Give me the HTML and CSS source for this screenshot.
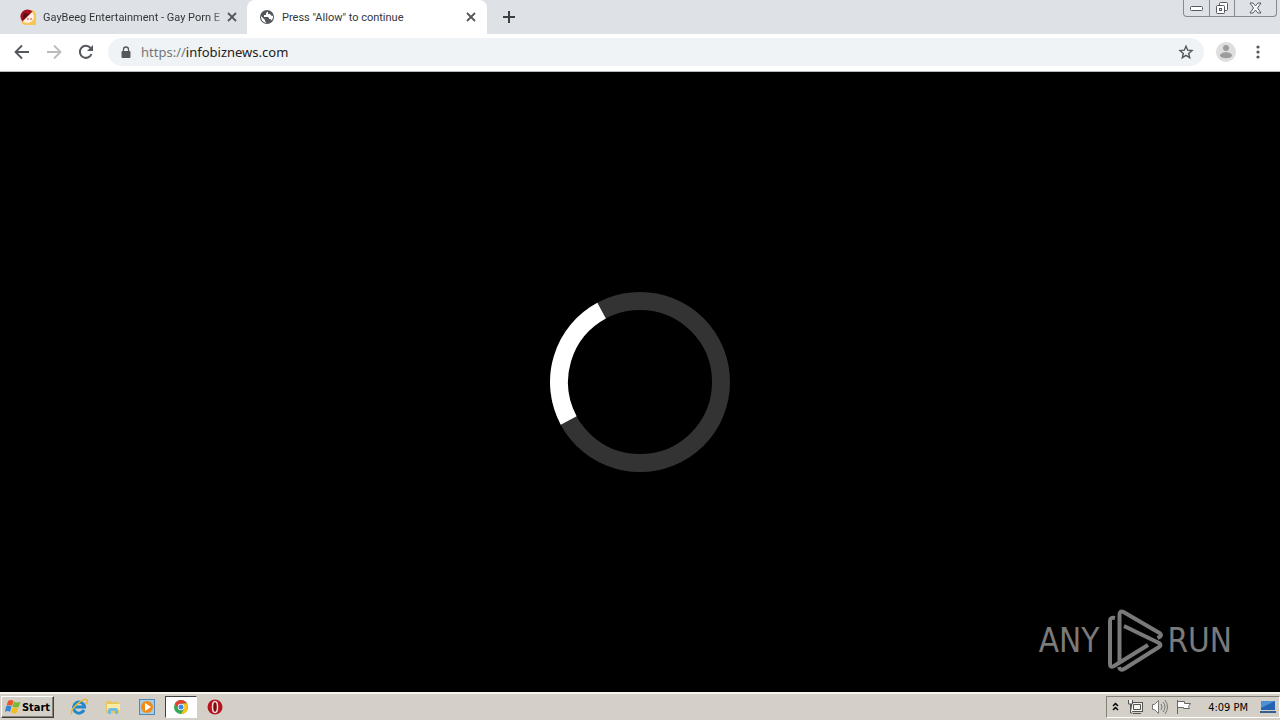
FILE: index.html
```html
<!DOCTYPE html>
<html lang="en">
<head>
<meta charset="utf-8">
<title>Press "Allow" to continue</title>
<link rel="stylesheet" href="styles.css">
</head>
<body>
<header class="browser">
  <div class="tabstrip">
    <div class="tab">
      <svg class="favicon" width="16" height="16" viewBox="0 0 16 16"><path d="M5 1h6a5 5 0 0 1 5 5v10H6a5 5 0 0 1-5-5V5z" fill="#f6c552"/><circle cx="7.500" cy="7.500" r="6.500" fill="#fff0e2"/><path d="M2.500 12.500A7 7 0 0 1 12.500 2.500z" fill="#a3121c"/><path d="M3.500 10.500A6 6 0 0 1 4.500 4l5 1z" fill="#5c0d18"/><circle cx="8" cy="10" r=".7" fill="#a3121c"/><circle cx="11" cy="10" r=".7" fill="#a3121c"/></svg>
      <span class="tab-title faded">GayBeeg Entertainment - Gay Porn E</span>
      <button class="close" aria-label="Close tab"><svg width="10" height="10" viewBox="0 0 10 10"><path d="m1 1 8 8M9 1 1 9" stroke="#54575b" stroke-width="1.800"/></svg></button>
    </div>
    <div class="tab active">
      <svg class="favicon" width="16" height="16" viewBox="0 0 16 16"><circle cx="8" cy="8" r="7" fill="#54575b"/><path d="M9 2.500 7 4v2H5v2h4l1 1v1h1.500l1.300 1.500A6 6 0 0 0 14 7l-2-.5-1-1.500H9zM2 7l4 4v1l1.500 2A6 6 0 0 1 2 7" fill="#fff"/></svg>
      <span class="tab-title">Press "Allow" to continue</span>
      <button class="close" aria-label="Close tab"><svg width="10" height="10" viewBox="0 0 10 10"><path d="m1 1 8 8M9 1 1 9" stroke="#54575b" stroke-width="1.800"/></svg></button>
    </div>
    <button class="newtab" aria-label="New tab"><svg width="12" height="12" viewBox="0 0 12 12"><path d="M6 0v12M0 6h12" stroke="#3c4043" stroke-width="2"/></svg></button>
    <div class="window-buttons">
      <button aria-label="Minimize"><svg width="13" height="6" viewBox="0 0 13 6"><rect x=".5" y="1.500" width="12" height="4" rx="1" fill="#fff" stroke="#565963"/></svg></button>
      <button aria-label="Restore"><svg width="14" height="14" viewBox="0 0 14 14" fill="#fff" stroke="#565963"><rect x="4.500" y="1.500" width="8" height="8" rx="1"/><rect x="1.500" y="4.500" width="8" height="8" rx="1"/><rect x="4.500" y="7.500" width="2" height="2"/></svg></button>
      <button class="wide" aria-label="Close"><svg width="13" height="12" viewBox="0 0 13 12"><path d="M1 1h3l2.500 3L9 1h3L8.500 6l3.500 5H9L6.500 8 4 11H1l3.500-5z" fill="#fff" stroke="#565963"/></svg></button>
    </div>
  </div>
  <nav class="toolbar">
    <button aria-label="Back"><svg width="16" height="16" viewBox="0 0 16 16"><path d="M15 8H2M8 1.500 1.500 8 8 14.500" fill="none" stroke="#54575b" stroke-width="1.800"/></svg></button>
    <button aria-label="Forward"><svg width="16" height="16" viewBox="0 0 16 16"><path d="M1 8h13M8 1.500 14.500 8 8 14.500" fill="none" stroke="#b9bbbd" stroke-width="1.800"/></svg></button>
    <button aria-label="Reload"><svg width="16" height="16" viewBox="0 0 16 16"><path d="M13.500 10A6 6 0 1 1 12.500 4" fill="none" stroke="#54575b" stroke-width="2"/><path d="M15 1v6H9z" fill="#54575b"/></svg></button>
    <div class="address">
      <svg width="10" height="13" viewBox="0 0 10 13"><rect x=".5" y="5" width="9" height="7" rx="1" fill="#54575b"/><path d="M2.500 5V3.500a2.500 2.500 0 0 1 5 0V5" fill="none" stroke="#54575b" stroke-width="1.300"/></svg>
      <a class="url" href="#"><span class="scheme">https://</span>infobiznews.com</a>
      <button class="star" aria-label="Bookmark"><svg width="16" height="16" viewBox="0 0 16 16"><path d="m8 2.200 1.700 4 4.300.4-3.300 2.800 1 4.300L8 11.400l-3.700 2.300 1-4.300L2 6.600l4.300-.4z" fill="none" stroke="#54575b" stroke-width="1.400"/></svg></button>
    </div>
    <button class="profile" aria-label="Profile"><svg width="20" height="20" viewBox="0 0 20 20"><circle cx="10" cy="10" r="10" fill="#dedede"/><circle cx="10" cy="6" r="3" fill="#9b9c9e"/><path d="M4 14c0-5 12-5 12 0-2 3-10 3-12 0" fill="#9b9c9e"/></svg></button>
    <button aria-label="Menu"><svg width="4" height="14" viewBox="0 0 4 14" fill="#54575b"><circle cx="2" cy="2" r="1.600"/><circle cx="2" cy="7" r="1.600"/><circle cx="2" cy="12" r="1.600"/></svg></button>
  </nav>
</header>
<main class="page">
  <svg class="spinner" width="180" height="180" viewBox="0 0 180 180" role="img" aria-label="Loading"><circle cx="90" cy="90" r="81" fill="none" stroke="#333" stroke-width="18"/><path d="M18.700 128.400A81 81 0 0 1 51.600 18.700" fill="none" stroke="#fff" stroke-width="18"/></svg>
  <div class="brand">
    <span class="brand-word">ANY</span>
    <svg width="56" height="64" viewBox="-2 0 56 64" overflow="visible" fill="none" stroke="#7a7a7a" stroke-width="4" stroke-linejoin="round"><path d="M8 9Q3 8 3 12v43q0 4 4 2l34-21"/><path d="M12.500 53V6q0-5 4-3l36 21q3 2 0 4l-2 1"/><path d="m17 17 35 17q3 2 0 4L17 60q-4 2-5-2"/></svg>
    <span class="brand-word">RUN</span>
  </div>
</main>
<footer class="taskbar">
  <button class="start"><svg width="16" height="16" viewBox="0 0 16 16"><path d="M3 2q3-2 5.500 0L7 7Q4 5 1.500 7z" fill="#eb5727"/><path d="M9 2.500q3 2 6.500 0L14 7.500q-3 2-6.500 0z" fill="#78b934"/><path d="M1 7.500q3-2 5.500 0L5 13q-2-2-5 0z" fill="#3587d4"/><path d="M7.500 8q3 2 6 0l-1.500 5.500q-3 2-6 0z" fill="#f5bd25"/></svg>Start</button>
  <div class="tasks">
    <button aria-label="Internet Explorer"><svg width="18" height="18" viewBox="0 0 18 18"><path d="M14 12a5.500 5.500 0 1 1 .5-3H5" fill="none" stroke="#2087cf" stroke-width="3"/><path d="M2 16C-2 13 14-2 17 2c1 1 0 3-1 4" fill="none" stroke="#e5b832" stroke-width="1.500"/></svg></button>
    <button aria-label="Explorer"><svg width="16" height="16" viewBox="0 0 16 16"><path d="M1 2h5l1 1h7v11H1z" fill="#e9c75e"/><path d="M2 5h13v6H2z" fill="#faeba5"/><path d="M3 15v-4q0-2 2-2h6q2 0 2 2v4h-3v-3H6v3z" fill="#72bddd"/></svg></button>
    <button aria-label="Media Player"><svg width="16" height="16" viewBox="0 0 16 16"><rect x=".5" y=".5" width="15" height="15" fill="#a7cce6" stroke="#5389b6"/><circle cx="8" cy="8" r="6" fill="#f28c16"/><path d="m6 4 6 4-6 4z" fill="#fff"/></svg></button>
    <button class="current" aria-label="Chrome"><svg width="14" height="14" viewBox="0 0 14 14"><circle cx="7" cy="7" r="7" fill="#35a653"/><path d="M1 3.500a7 7 0 0 1 12 0H7L4 9z" fill="#e34132"/><path d="M13 3.500A7 7 0 0 1 7 14l3-5-1-5.500z" fill="#fbc318"/><circle cx="7" cy="7" r="3.300" fill="#fff"/><circle cx="7" cy="7" r="2.500" fill="#4285e8"/></svg></button>
    <button aria-label="Opera"><svg width="16" height="16" viewBox="0 0 16 16"><circle cx="8" cy="8" r="7.500" fill="#b5161d"/><ellipse cx="8" cy="8" rx="2.500" ry="5.500" fill="#7b0c11" stroke="#f4dcdc" stroke-width="1.500"/></svg></button>
  </div>
  <div class="tray">
    <button aria-label="Show hidden icons"><svg width="7" height="10" viewBox="0 0 7 10"><path d="m1 4 2.500-2.500L6 4M1 8l2.500-2.500L6 8" fill="none" stroke="#000" stroke-width="1.500"/></svg></button>
    <button aria-label="Network"><svg width="16" height="16" viewBox="0 0 16 16" fill="#f4f3ee" stroke="#555"><rect x="4.500" y="3.500" width="11" height="9"/><path d="M6.500 5.500h7v5h-7zM6 14.500h8M1.500 1v4h4V1M3.500 5v9h2"/></svg></button>
    <button aria-label="Volume"><svg width="17" height="16" viewBox="0 0 17 16" fill="none" stroke="#777"><path d="M1.500 5.500h2l4-4v13l-4-4h-2z" fill="#fff"/><path d="M10 5q2 3 0 6M12 3q4 5 0 10M14 1q5 7 0 14"/></svg></button>
    <button aria-label="Action Center"><svg width="16" height="16" viewBox="0 0 16 16"><path d="M1.500 1v14M1.500 2.500h7v2h6l-2 3 1 2h-6v-1h-6" fill="#fff" stroke="#666"/></svg></button>
    <time class="clock">4:09 PM</time>
    <button aria-label="Show desktop"><svg width="16" height="14" viewBox="0 0 16 14"><path d="M1 1h14v9H1z" fill="#2463b4"/><path d="M1 1h14L1 8z" fill="#4c91d6"/><path d="M0 11h16v2H0z" fill="#345f91"/></svg></button>
  </div>
</footer>
</body>
</html>
```
FILE: styles.css
```css
* { box-sizing: border-box; }
body {
  margin: 0;
  min-height: 100vh;
  display: flex;
  flex-direction: column;
  background: #000;
  font-family: "DejaVu Sans Condensed", "DejaVu Sans", sans-serif;
  font-size: 11px;
  color: #333639;
}
button {
  display: flex;
  align-items: center;
  justify-content: center;
  flex: none;
  border: 0;
  padding: 0;
  background: none;
  font: inherit;
  color: inherit;
}
svg { display: block; flex: none; }
.tabstrip {
  display: flex;
  height: 34px;
  background: #dee1e6;
}
.tab {
  display: flex;
  align-items: center;
  width: 240px;
  padding: 0 11px 0 12px;
}
.tab:first-child { width: 247px; padding: 0 10px 0 20px; }
.tab.active { background: #fff; border-radius: 8px 8px 0 0; }
.favicon { margin-right: 7px; }
.tab-title {
  flex: 1;
  min-width: 0;
  overflow: hidden;
  white-space: nowrap;
  font-family: Roboto, "Liberation Sans", sans-serif;
}
.faded {
  -webkit-mask-image: linear-gradient(to right, #000 90%, transparent 105%);
  mask-image: linear-gradient(to right, #000 90%, transparent 105%);
}
.newtab { width: 44px; }
.window-buttons {
  display: flex;
  height: 17px;
  margin: 0 3px 0 auto;
  border: 1px solid #858993;
  border-top: 0;
  border-radius: 0 0 4px 4px;
}
.window-buttons button { width: 25px; }
.window-buttons button + button { border-left: 1px solid #858993; }
.window-buttons .wide { width: 42px; }
.toolbar {
  display: flex;
  align-items: center;
  gap: 16px;
  height: 38px;
  padding: 0 20px 1px 14px;
  background: #fff;
  border-bottom: 1px solid #b5b7ba;
}
.address {
  display: flex;
  flex: 1;
  align-items: center;
  height: 28px;
  margin-left: -2px;
  padding: 0 10px 0 13px;
  gap: 10px;
  border-radius: 14px;
  background: #f0f3f5;
}
.url {
  flex: 1;
  font-family: "Noto Sans", sans-serif;
  font-size: 13px;
  color: #202124;
  text-decoration: none;
}
.scheme { color: #73777b; }
.profile { margin: 0 4px 0 -4px; }
.page {
  position: relative;
  display: flex;
  flex: 1;
  align-items: center;
  justify-content: center;
  background: #000;
}
.brand {
  position: absolute;
  right: 48px;
  bottom: 19px;
  display: flex;
  align-items: center;
  gap: 6px;
  color: #7a7a7a;
}
.brand-word {
  font-size: 33px;
  line-height: 64px;
}
.taskbar {
  display: flex;
  align-items: center;
  height: 28px;
  padding: 0 0 0 1px;
  background: #d4d0c8;
  border-top: 2px solid #f4f3ef;
}
.start {
  gap: 1px;
  width: 53px;
  height: 22px;
  border: 1px solid;
  border-color: #fff #404040 #404040 #fff;
  box-shadow: inset -1px -1px #858178;
  font-size: 11px;
  font-weight: bold;
  color: #000;
}
.tasks { display: flex; gap: 2px; margin-left: 9px; }
.tasks button { width: 32px; height: 22px; }
.tasks .current {
  border: 1px solid;
  border-color: #404040 #fff #fff #404040;
  background: #fff;
}
.tray {
  display: flex;
  align-items: center;
  gap: 8px;
  height: 22px;
  margin-left: auto;
  padding: 0 3px 0 5px;
  border: 1px solid;
  border-color: #858178 #fff #fff #858178;
}
.clock { margin: 0 4px 0 8px; color: #000; }
```
